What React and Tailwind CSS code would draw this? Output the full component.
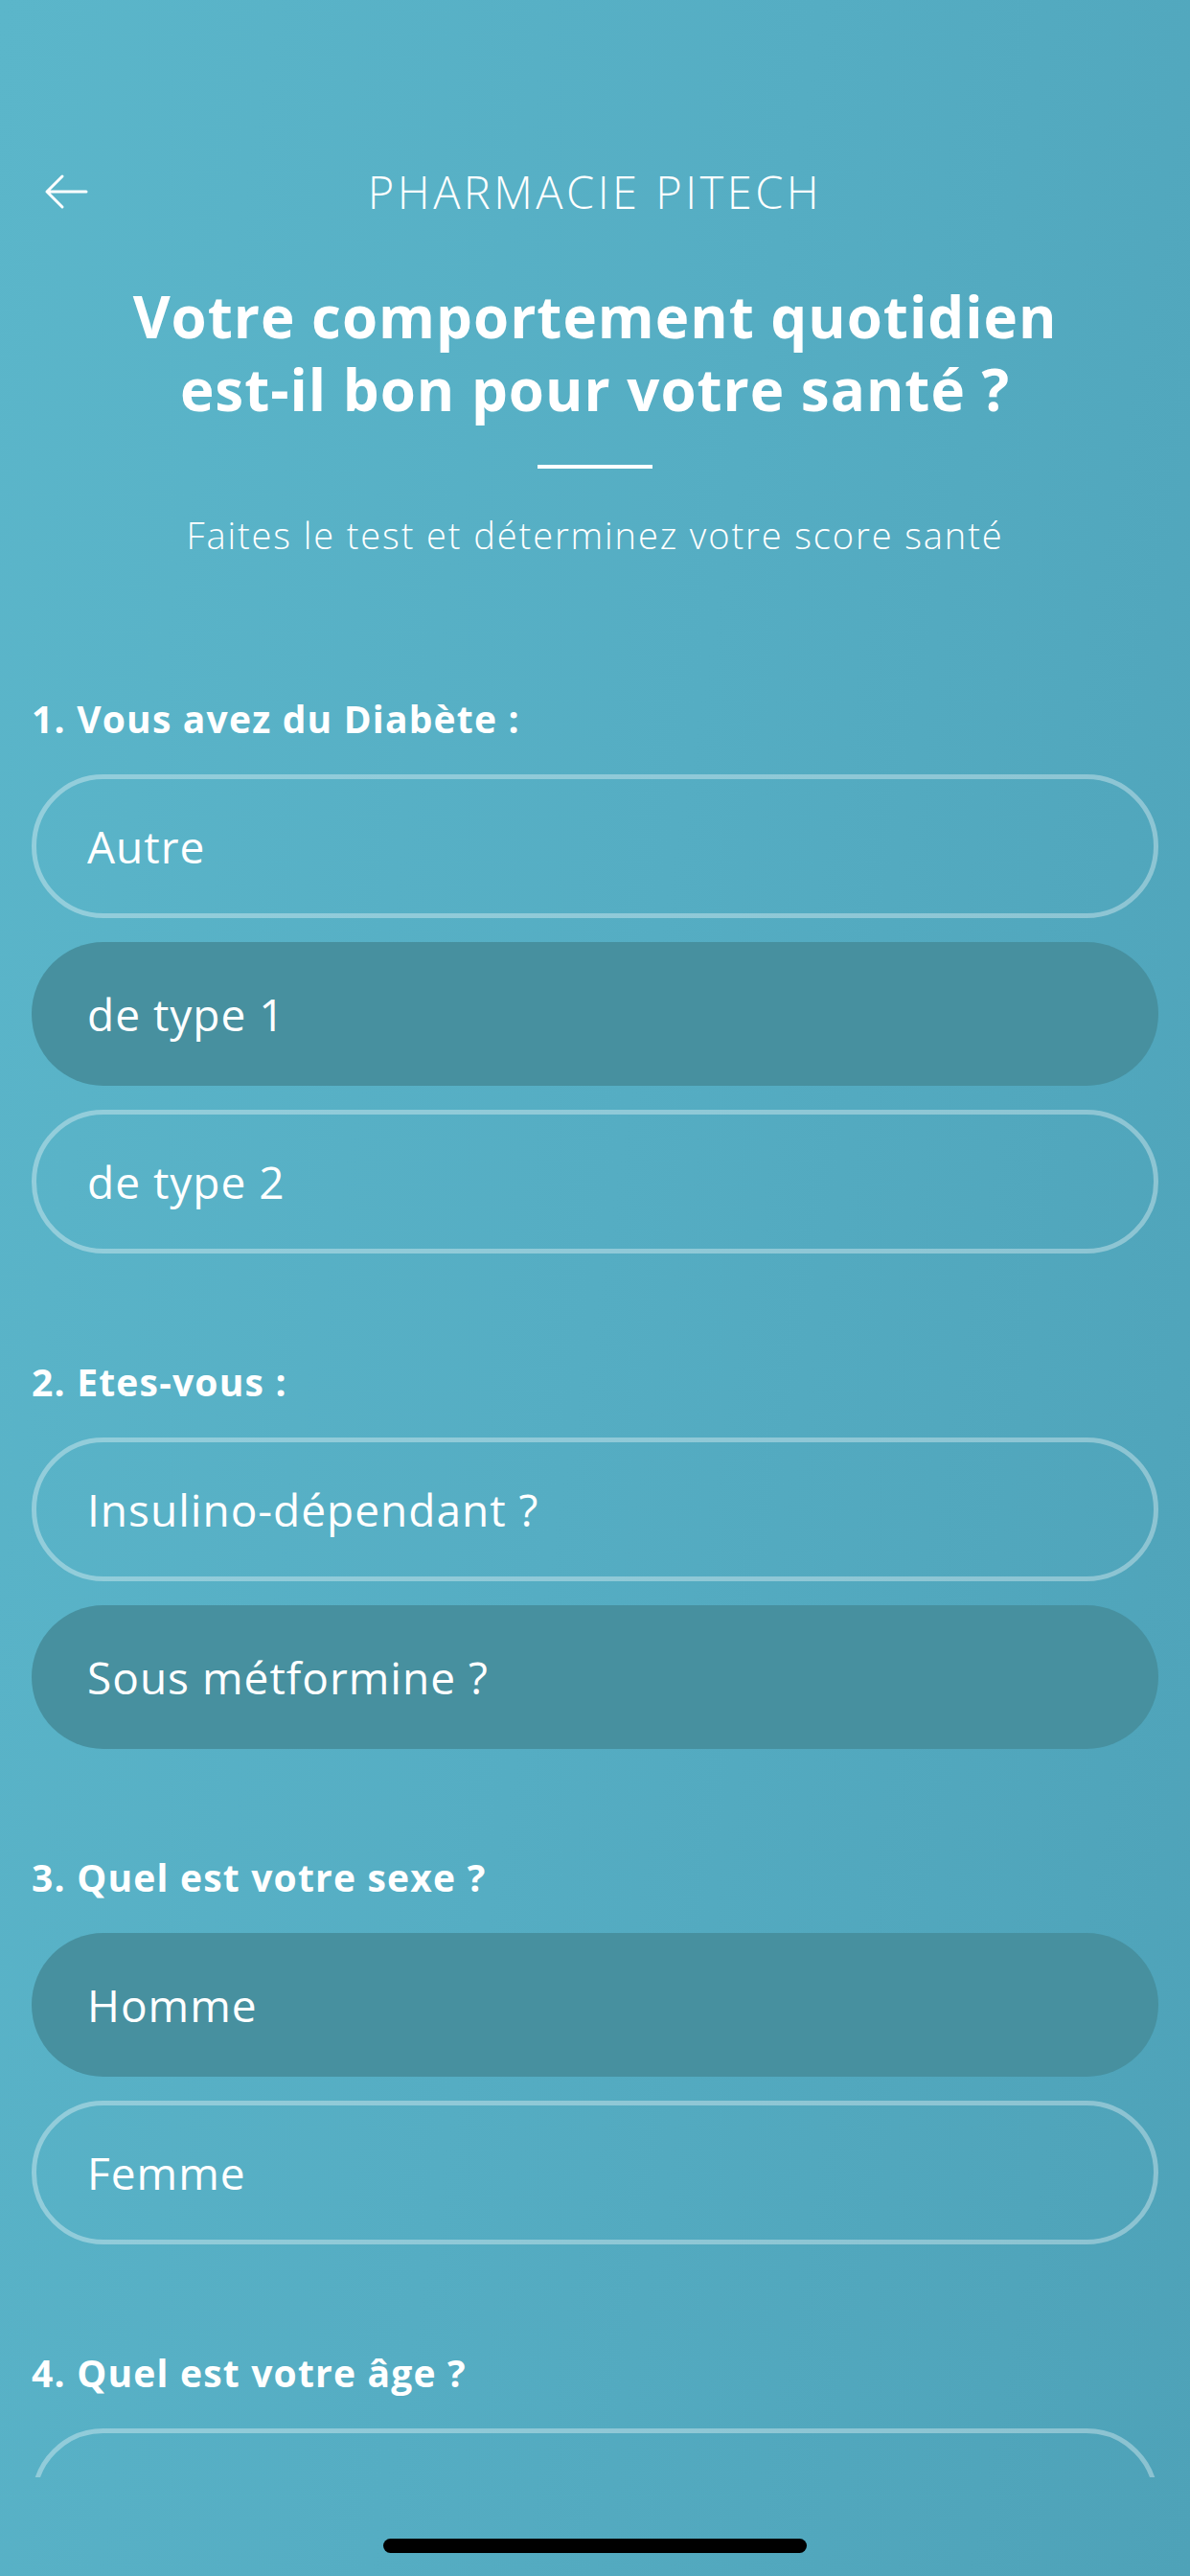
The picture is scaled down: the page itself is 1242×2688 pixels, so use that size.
import React from "react";

const font = { fontFamily: '"Open Sans", "Noto Sans", sans-serif' };

const questions = [
  {
    label: "1. Vous avez du Diabète :",
    options: [
      { text: "Autre" },
      { text: "de type 1", selected: true },
      { text: "de type 2" },
    ],
  },
  {
    label: "2. Etes-vous :",
    options: [
      { text: "Insulino-dépendant ?" },
      { text: "Sous métformine ?", selected: true },
    ],
  },
  {
    label: "3. Quel est votre sexe ?",
    options: [{ text: "Homme", selected: true }, { text: "Femme" }],
  },
  {
    label: "4. Quel est votre âge ?",
    options: [{ text: "" }],
  },
];

function BackArrow() {
  return (
    <svg width="46" height="38" viewBox="0 0 46 38" fill="none">
      <path
        d="M3 19 H44 M19 3 L3 19 L19 35"
        stroke="white"
        strokeWidth="3"
        strokeLinecap="round"
        strokeLinejoin="round"
      />
    </svg>
  );
}

function Option({ text, selected }) {
  return (
    <button
      className={
        "flex h-[150px] w-full items-center rounded-full text-left text-[46px] font-normal tracking-[1px] text-white " +
        (selected ? "bg-[#47909f] pl-[58px]" : "border-[5px] border-white/35 pl-[53px]")
      }
    >
      {text}
    </button>
  );
}

function Question({ label, options, first }) {
  return (
    <section className={first ? "mt-[144px]" : "mt-[110px]"}>
      <h2 className="h-[48px] text-[39px] font-bold leading-[48px] tracking-[1.2px] text-white">
        {label}
      </h2>
      <div className="mt-[34px] flex flex-col gap-[25px]">
        {options.map((o, i) => (
          <Option key={i} {...o} />
        ))}
      </div>
    </section>
  );
}

export default function App() {
  return (
    <div
      className="flex h-[2688px] w-full flex-col bg-[linear-gradient(100deg,#5bb6ca_0%,#55adc3_50%,#4ea2b8_100%)]"
      style={font}
    >
      <div className="h-[2585px] overflow-hidden">
        <header className="relative mt-[170px] flex h-[60px] items-center justify-center">
          <div className="absolute left-[46px] top-[11px]">
            <BackArrow />
          </div>
          <h1 className="text-[47px] font-light tracking-[3.5px] text-white">
            PHARMACIE PITECH
          </h1>
        </header>

        <h2 className="mt-[62px] text-center text-[60px] font-bold leading-[76px] tracking-[1px] text-white">
          Votre comportement quotidien
          <br />
          est-il bon pour votre santé ?
        </h2>

        <div className="mx-auto mt-[41px] h-[4px] w-[120px] bg-white" />

        <p className="mt-[45px] text-center text-[38px] font-light leading-[48px] tracking-[1.9px] text-white">
          Faites le test et déterminez votre score santé
        </p>

        <main className="px-[33px]">
          {questions.map((q, i) => (
            <Question key={i} {...q} first={i === 0} />
          ))}
        </main>
      </div>

      <div className="flex flex-1 justify-center">
        <div className="mt-[64px] h-[15px] w-[442px] rounded-full bg-black" />
      </div>
    </div>
  );
}
